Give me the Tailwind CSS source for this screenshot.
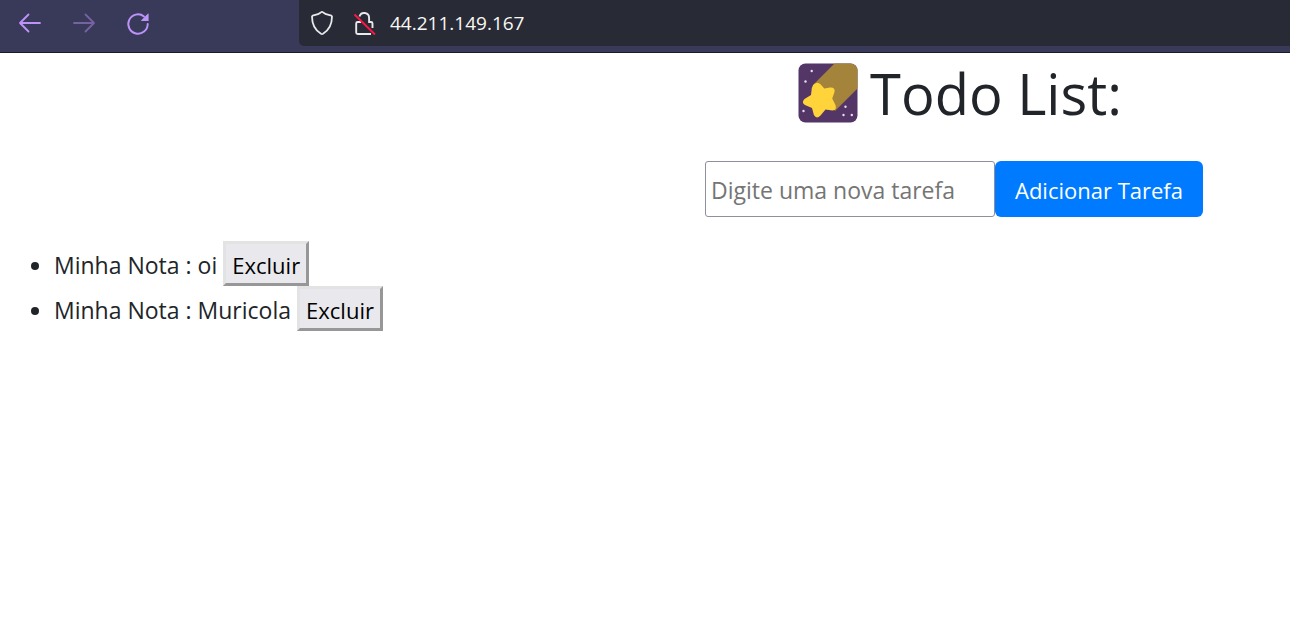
<!DOCTYPE html>
<html lang="pt-BR">
<head>
<meta charset="utf-8">
<title>Todo List</title>
<script src="https://cdn.jsdelivr.net/npm/@tailwindcss/browser@4"></script>
</head>
<body class="min-h-screen overflow-x-hidden bg-white font-['Open_Sans','Noto_Sans',sans-serif] text-[23px] text-[#212529]">
<header class="flex h-[53px] items-start border-b border-[#1b1a26] bg-[#393a59]">
  <nav class="flex w-[299px] shrink-0 gap-[30px] pt-3 pl-[18px] text-[#bd93f9]">
    <button type="button" aria-label="Voltar" class="size-6"><svg viewBox="0 0 24 24" class="size-6" fill="none" stroke="currentColor" stroke-width="1.8" stroke-linecap="round" stroke-linejoin="round"><path d="M22 11H2M10.500 2.500 2 11l8.500 8.500"/></svg></button>
    <button type="button" aria-label="Avançar" class="size-6 opacity-45"><svg viewBox="0 0 24 24" class="size-6" fill="none" stroke="currentColor" stroke-width="1.800" stroke-linecap="round" stroke-linejoin="round"><path d="M2 11h20M13.500 2.500 22 11l-8.500 8.500"/></svg></button>
    <button type="button" aria-label="Recarregar" class="size-6"><svg viewBox="0 0 24 24" class="size-6" fill="none"><path d="M21.700 12A9.700 9.700 0 1 1 18 4.400" stroke="currentColor" stroke-width="1.900" stroke-linecap="round"/><path d="M22.600 2v7h-7q-1 0-.3-.8l6.500-6.500q.8-.7.800.3Z" fill="currentColor"/></svg></button>
  </nav>
  <div class="flex h-[46px] min-w-0 flex-1 items-center rounded-bl-[5px] bg-[#282a36] pb-px pl-[11px] text-[#f8f8f2]">
    <svg viewBox="0 0 24 26" class="mr-[19px] h-[26px] w-6 shrink-0" fill="none" stroke="#e9e9ec" stroke-width="1.800" stroke-linejoin="round"><path d="M12 1.800Q11.500 1.800 10.800 2.400L8 4.200 2.600 5.700Q2 6 2 6.600C2 15 4.500 20 11 23.800q1 .5 2 0C19.500 20 22 15 22 6.600Q22 6 21.400 5.700L16 4.200l-2.800-1.800Q12.500 1.800 12 1.800Z"/></svg>
    <svg viewBox="0 0 24 26" class="mr-[13px] h-[26px] w-6 shrink-0" fill="none"><path d="M6.500 6.500A4.900 4.900 0 0 1 16.100 8v4H18q1.500 0 1.500 1.500V18M8 12H4.700q-1.500 0-1.500 1.500v9q0 1.500 1.500 1.500H18" stroke="#e9e9ec" stroke-width="1.900"/><path d="M1.500 4.500 22 24.500" stroke="#ff1744" stroke-width="1.900"/></svg>
    <input type="text" aria-label="Endereço" value="44.211.149.167" class="min-w-0 flex-1 bg-transparent text-[19px] leading-6 outline-none">
  </div>
</header>
<main class="pt-1">
  <section class="flex flex-col items-center pl-[630px]">
    <h1 class="flex h-[72px] items-center gap-3 text-[56px] leading-[72px] whitespace-nowrap">
      <svg viewBox="0 0 60 60" class="size-[60px] shrink-0" role="img" aria-label="Estrela cadente">
        <defs><clipPath id="tile"><rect width="59" height="59" x=".5" y=".5" rx="7"/></clipPath></defs>
        <g clip-path="url(#tile)"><path d="M0 0h60v60H0Z" fill="#533566"/><path d="M15 22 37 0h23v25L37 48Z" fill="#a4833a"/></g>
        <path d="M17 20.500q3-2 5.500.8l3.800 4.200 5.700-1q5.500-.4 4.500 4.500l-2.300 6.500 3.300 6.500q1.600 5-3 5.500l-7-1-5 6q-4 4.200-6.600-.5l-1.900-7-7-3q-4-2.500-.5-6l6.500-4 .8-7q.8-3.500 3.200-4.500Z" fill="#ffd43b"/>
        <g fill="#e8dcf0"><circle cx="13.700" cy="8" r="1.200"/><circle cx="7.500" cy="18.500" r="1.200"/><circle cx="5.500" cy="48" r="1.200"/><circle cx="47.500" cy="43.700" r="1.200"/><circle cx="45.500" cy="52" r="1.200"/><circle cx="53.800" cy="52" r="1.200"/></g>
      </svg>
      <span>Todo List:</span>
    </h1>
    <form class="mt-8 mr-3 flex" onsubmit="return false">
      <input type="text" aria-label="Nova tarefa" placeholder="Digite uma nova tarefa" class="h-14 w-[290px] rounded-[3px] border border-[#8f8f9d] bg-white px-[5px] pt-0.5 placeholder:text-[#757575]">
      <button type="submit" class="h-14 w-[208px] rounded-[6px] bg-[#007bff] pt-0.5 text-[22px] whitespace-nowrap text-white">Adicionar Tarefa</button>
    </form>
  </section>
  <ul class="mt-6 list-disc pl-[54px] leading-9">
    <li class="h-[45px] whitespace-nowrap">Minha Nota : oi <button type="button" class="h-[45px] w-[86px] border-3 border-t-[#e3e3e3] border-r-[#979797] border-b-[#979797] border-l-[#e3e3e3] bg-[#e9e9ed] pt-0.5 text-[22px] text-black">Excluir</button></li>
    <li class="h-[45px] whitespace-nowrap">Minha Nota : Muricola <button type="button" class="h-[45px] w-[86px] border-3 border-t-[#e3e3e3] border-r-[#979797] border-b-[#979797] border-l-[#e3e3e3] bg-[#e9e9ed] pt-0.5 text-[22px] text-black">Excluir</button></li>
  </ul>
</main>
</body>
</html>
